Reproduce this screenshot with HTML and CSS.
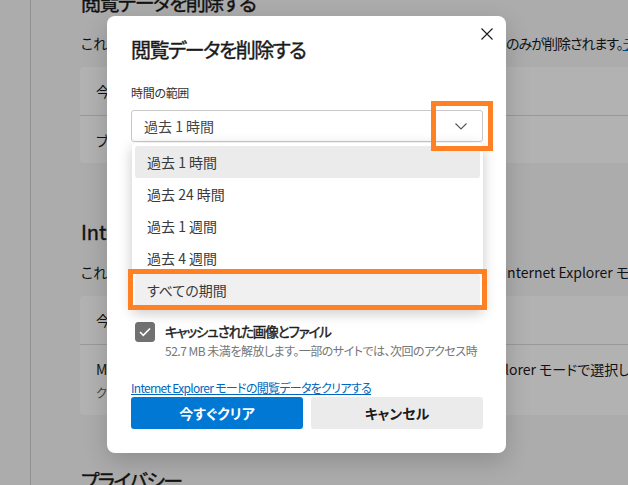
FILE: index.html
```html
<!DOCTYPE html>
<html lang="ja">
<head>
<meta charset="utf-8">
<title>閲覧データを削除する</title>
<link rel="stylesheet" href="styles.css">
</head>
<body>
<div class="page">
  <aside class="sidebar"></aside>
  <main class="content">
    <h2 class="sec-title first">閲覧データを削除する</h2>
    <p class="sec-desc"><span class="clip w-desc">これには、同期されているすべてのデバイスのデータが含まれます。このデバイスの閲覧データ</span><span class="tail">のみが削除されます。</span><a class="bg-link" href="#">データの管理</a></p>
    <div class="card">
      <div class="card-row">今すぐ閲覧データをクリア</div>
      <div class="card-row">ブラウザーを閉じるたびにクリアするデータを選択する</div>
    </div>
    <h2 class="sec-title gap"><span class="latin">Internet Explorer</span> の閲覧データをクリアする</h2>
    <p class="sec-desc"><span class="clip w-desc2">これには、Microsoft Edge の閲覧データと、</span>Internet Explorer モードの閲覧データが含まれます。</p>
    <div class="card">
      <div class="card-row">今すぐ閲覧データをクリア</div>
      <div class="card-row tall">
        <div><span class="clip w-row">Microsoft Edge を閉じるたびに、Internet Exp</span>lorer モードで選択したデータを消去する</div>
        <div class="card-sub">クリアするデータを選択するには、[閲覧データをクリアする] を選びます</div>
      </div>
    </div>
    <h2 class="sec-title gap2">プライバシー</h2>
  </main>
</div>

<div class="scrim"></div>

<div class="dialog">
  <button class="close" aria-label="閉じる">
    <svg width="12" height="12" viewBox="0 0 12 12"><path d="M0.5 0.5 L11.5 11.5 M11.5 0.5 L0.5 11.5" stroke="#1a1a1a" stroke-width="1.1" fill="none"/></svg>
  </button>
  <h1 class="dlg-title">閲覧データを削除する</h1>
  <div class="field-label">時間の範囲</div>
  <div class="select">
    <span>過去 1 時間</span>
    <svg class="chev" width="12" height="7" viewBox="0 0 12 7"><path d="M0.5 0.5 L6 6 L11.5 0.5" stroke="#555" stroke-width="1.1" fill="none"/></svg>
  </div>

  <div class="opts">
    <div class="opt">
      <span class="cb"></span>
      <div><div class="opt-title">閲覧の履歴</div><div class="opt-sub">12 項目。アドレス バーにオートコンプリートを含みます。</div></div>
    </div>
    <div class="opt">
      <span class="cb"></span>
      <div><div class="opt-title">ダウンロードの履歴</div><div class="opt-sub">なし</div></div>
    </div>
    <div class="opt">
      <span class="cb"></span>
      <div><div class="opt-title">Cookie およびその他のサイト データ</div><div class="opt-sub">6 個のサイトから。ほとんどのサイトからサインアウトします。</div></div>
    </div>
    <div class="opt">
      <span class="cb checked">
        <svg width="12" height="10" viewBox="0 0 12 10"><path d="M1 5 L4.3 8.3 L11 1.5" stroke="#fff" stroke-width="1.6" fill="none"/></svg>
      </span>
      <div><div class="opt-title strong">キャッシュされた画像とファイル</div><div class="opt-sub">52.7 MB 未満を解放します。一部のサイトでは、次回のアクセス時</div></div>
    </div>
  </div>

  <a class="ie-link" href="#">Internet Explorer モードの閲覧データをクリアする</a>
  <div class="actions">
    <button class="btn primary">今すぐクリア</button>
    <button class="btn">キャンセル</button>
  </div>

  <ul class="menu">
    <li class="item active">過去 1 時間</li>
    <li class="item">過去 24 時間</li>
    <li class="item">過去 1 週間</li>
    <li class="item">過去 4 週間</li>
    <li class="item hover">すべての期間</li>
  </ul>

  <div class="hl hl-chev"></div>
  <div class="hl hl-item"></div>
</div>
</body>
</html>
```

FILE: styles.css
```css
* { box-sizing: border-box; }

html, body {
  margin: 0;
  padding: 0;
  width: 628px;
  height: 485px;
  overflow: hidden;
}

body {
  position: relative;
  background: #f7f7f7;
  font-family: "Noto Sans CJK JP", "Noto Sans", sans-serif;
  font-feature-settings: "palt";
  color: #1b1b1b;
}

/* ---------- background settings page ---------- */
.page {
  display: flex;
  height: 485px;
}

.sidebar {
  width: 31px;
  flex: none;
  border-right: 1px solid #cfcfcf;
}

.content {
  flex: 1;
  min-width: 0;
  padding-left: 50px;
  white-space: nowrap;
}

.sec-title {
  margin: 0;
  font-size: 20px;
  line-height: 24px;
  font-weight: 400;
  letter-spacing: -1.6px;
  -webkit-text-stroke: 0.4px currentColor;
}
.sec-title .latin { letter-spacing: 0; }
.sec-title.first { margin-top: -9px; }
.sec-title.gap { margin-top: 57px; }
.sec-title.gap2 { margin-top: 54px; }

.sec-desc {
  margin: 18px 0 0;
  font-size: 14px;
  line-height: 20px;
}

.tail { letter-spacing: -1px; }

/* part of a line that sits under the dialog */
.clip {
  display: inline-block;
  overflow: hidden;
  vertical-align: top;
  white-space: nowrap;
}
.w-desc { width: 425px; }
.w-desc2 { width: 422px; }
.w-row { width: 409px; }

.bg-link {
  color: #0067c0;
  text-decoration: underline;
}

.card {
  margin: 14px 0 0 -1px;
  width: 620px;
  background: #fff;
  border-radius: 4px;
}

.card-row {
  height: 48px;
  padding-left: 16px;
  display: flex;
  align-items: center;
  font-size: 14px;
  line-height: 20px;
}
.card-row + .card-row { border-top: 1px solid #dcdcdc; }
.card-row.tall {
  height: 71px;
  flex-direction: column;
  align-items: flex-start;
  justify-content: center;
  gap: 6px;
}
.card-sub {
  font-size: 12px;
  line-height: 16px;
  color: #616161;
}

.scrim {
  position: absolute;
  inset: 0;
  background: rgba(0, 0, 0, 0.3);
}

/* ---------- dialog ---------- */
.dialog {
  position: absolute;
  left: 107px;
  top: 16px;
  width: 399px;
  height: 437px;
  padding: 20px 23px 24px 24px;
  background: #fff;
  border-radius: 8px;
  box-shadow: 0 8px 24px rgba(0, 0, 0, 0.18);
  display: flex;
  flex-direction: column;
}

.close {
  position: absolute;
  left: 374px;
  top: 12px;
  width: 12px;
  height: 12px;
  padding: 0;
  border: 0;
  background: none;
  display: block;
}
.close svg { display: block; }

.dlg-title {
  margin: 0;
  font-size: 20px;
  line-height: 28px;
  font-weight: 400;
  letter-spacing: -1.6px;
  -webkit-text-stroke: 0.4px currentColor;
  color: #1a1a1a;
}

.field-label {
  margin-top: 21px;
  font-size: 12px;
  line-height: 16px;
  color: #333;
  letter-spacing: -0.3px;
}

.select {
  margin-top: 9px;
  height: 32px;
  border: 1px solid #c9c9c9;
  border-radius: 3px;
  padding: 0 15px 0 12px;
  display: flex;
  align-items: center;
  justify-content: space-between;
  font-size: 14px;
  color: #444;
}
.chev { display: block; }

.opts {
  margin-top: 11px;
  height: 220px;
  overflow: hidden;
}

.opt {
  height: 56px;
  display: flex;
  gap: 10px;
  padding-left: 4px;
}

.cb {
  flex: none;
  width: 20px;
  height: 20px;
  margin-top: 1px;
  border: 1px solid #767676;
  border-radius: 3px;
  display: flex;
  align-items: center;
  justify-content: center;
}
.cb.checked {
  background: #717171;
  border-color: #717171;
}
.cb svg { display: block; }

.opt-title {
  font-size: 14px;
  line-height: 20px;
  color: #1f1f1f;
}
.opt-title.strong {
  font-size: 13.5px;
  -webkit-text-stroke: 0.45px currentColor;
  letter-spacing: -1.1px;
}

.opt-sub {
  margin-top: 2px;
  font-size: 12px;
  line-height: 16px;
  color: #767676;
  white-space: nowrap;
  letter-spacing: -0.5px;
}

.ie-link {
  margin-top: 7px;
  align-self: flex-start;
  font-size: 12px;
  line-height: 16px;
  color: #0067c0;
  text-decoration: underline;
  letter-spacing: -0.7px;
}

.actions {
  margin-top: 1px;
  display: flex;
  gap: 8px;
}

.btn {
  flex: 1;
  height: 32px;
  border: 0;
  border-radius: 3px;
  background: #ebebeb;
  color: #1b1b1b;
  font-family: inherit;
  font-feature-settings: "palt";
  font-size: 14px;
  font-weight: 600;
}
.btn.primary {
  background: #0078d4;
  color: #fff;
}

/* dropdown list open over the dialog */
.menu {
  position: absolute;
  left: 25px;
  top: 127px;
  width: 351px;
  margin: 0;
  padding: 3px;
  list-style: none;
  background: #fff;
  border-radius: 4px;
  box-shadow: 0 4px 14px rgba(0, 0, 0, 0.22);
}

.item {
  height: 32px;
  padding-left: 12px;
  display: flex;
  align-items: center;
  font-size: 14px;
  color: #3a3a3a;
  border-radius: 3px;
}
.item.active { background: #ebebeb; }
.item.hover { background: #f0f0f0; }

/* orange annotation boxes */
.hl {
  position: absolute;
  border: 5px solid #ff8124;
}
.hl-chev {
  left: 324px;
  top: 85px;
  width: 62px;
  height: 50px;
}
.hl-item {
  left: 21px;
  top: 253px;
  width: 359px;
  height: 41px;
}
```
